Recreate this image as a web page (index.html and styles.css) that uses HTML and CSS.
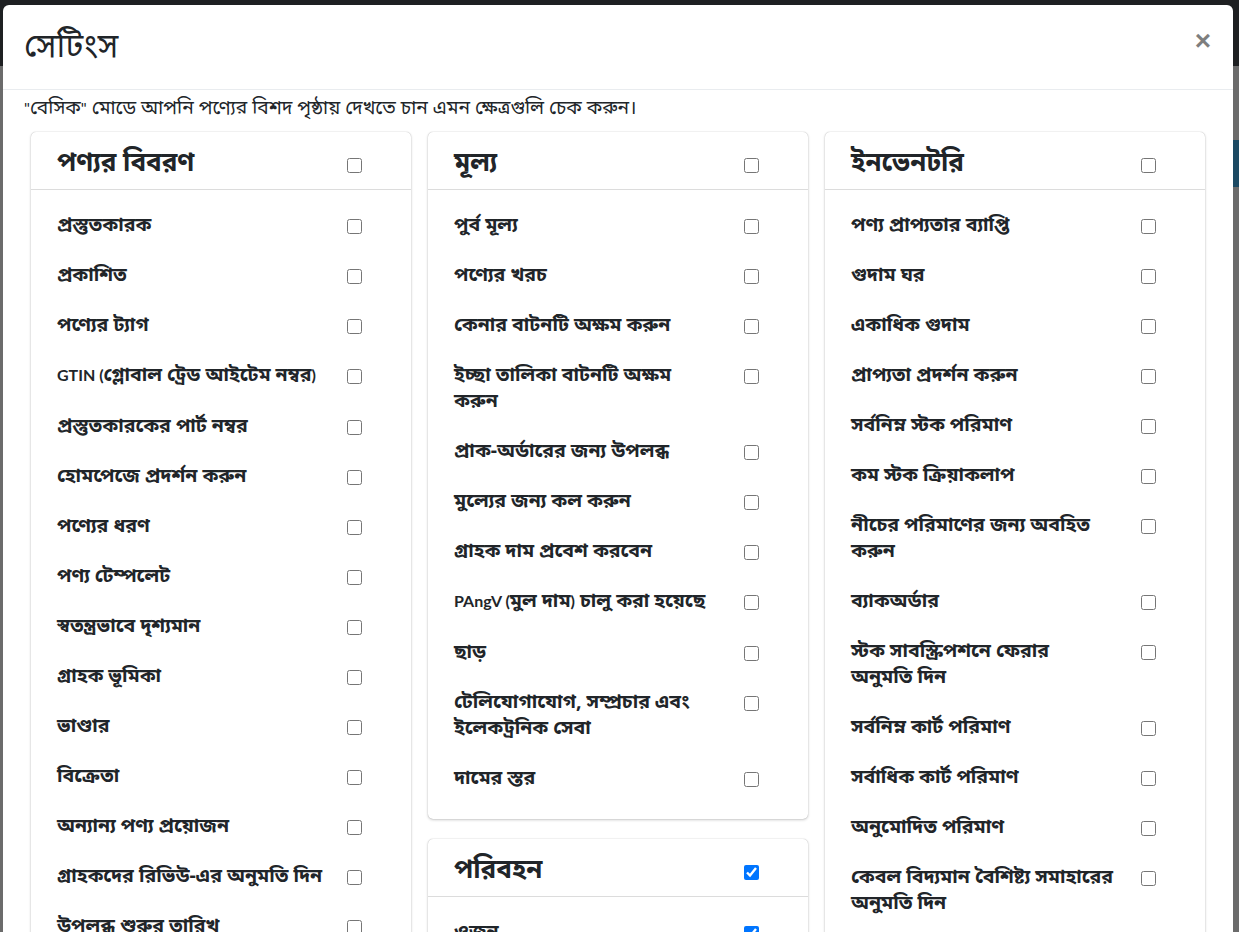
FILE: index.html
```html
<!DOCTYPE html>
<html lang="bn">
<head>
<meta charset="utf-8">
<title>সেটিংস</title>
<link rel="stylesheet" href="styles.css">
</head>
<body>
<div class="page">
  <div class="page-top"></div>
  <div class="page-main">
    <div class="page-band"></div>
  </div>
</div>

<div class="modal">
  <div class="modal-header">
    <h4 class="modal-title">সেটিংস</h4>
    <button class="close" type="button">×</button>
  </div>
  <div class="modal-body">
    <p class="intro"><span class="latin">"</span>বেসিক<span class="latin">"</span> মোডে আপনি পণ্যের বিশদ পৃষ্ঠায় দেখতে চান এমন ক্ষেত্রগুলি চেক করুন।</p>
    <div class="columns">
      <div class="column">
        <div class="card">
          <div class="card-header"><span class="card-title">পণ্যর বিবরণ</span><input type="checkbox"></div>
          <div class="card-body">
            <div class="item"><label>প্রস্তুতকারক</label><input type="checkbox"></div>
            <div class="item"><label>প্রকাশিত</label><input type="checkbox"></div>
            <div class="item"><label>পণ্যের ট্যাগ</label><input type="checkbox"></div>
            <div class="item"><label><span class="latin">GTIN (</span>গ্লোবাল ট্রেড আইটেম নম্বর<span class="latin">)</span></label><input type="checkbox"></div>
            <div class="item"><label>প্রস্তুতকারকের পার্ট নম্বর</label><input type="checkbox"></div>
            <div class="item"><label>হোমপেজে প্রদর্শন করুন</label><input type="checkbox"></div>
            <div class="item"><label>পণ্যের ধরণ</label><input type="checkbox"></div>
            <div class="item"><label>পণ্য টেম্পলেট</label><input type="checkbox"></div>
            <div class="item"><label>স্বতন্ত্রভাবে দৃশ্যমান</label><input type="checkbox"></div>
            <div class="item"><label>গ্রাহক ভূমিকা</label><input type="checkbox"></div>
            <div class="item"><label>ভাণ্ডার</label><input type="checkbox"></div>
            <div class="item"><label>বিক্রেতা</label><input type="checkbox"></div>
            <div class="item"><label>অন্যান্য পণ্য প্রয়োজন</label><input type="checkbox"></div>
            <div class="item"><label>গ্রাহকদের রিভিউ-এর অনুমতি দিন</label><input type="checkbox"></div>
            <div class="item"><label>উপলব্ধ শুরুর তারিখ</label><input type="checkbox"></div>
            <div class="item"><label>উপলব্ধ শেষ তারিখ</label><input type="checkbox"></div>
          </div>
        </div>
      </div>

      <div class="column">
        <div class="card">
          <div class="card-header"><span class="card-title">মূল্য</span><input type="checkbox"></div>
          <div class="card-body">
            <div class="item"><label>পুর্ব মূল্য</label><input type="checkbox"></div>
            <div class="item"><label>পণ্যের খরচ</label><input type="checkbox"></div>
            <div class="item"><label>কেনার বাটনটি অক্ষম করুন</label><input type="checkbox"></div>
            <div class="item"><label>ইচ্ছা তালিকা বাটনটি অক্ষম করুন</label><input type="checkbox"></div>
            <div class="item"><label>প্রাক-অর্ডারের জন্য উপলব্ধ</label><input type="checkbox"></div>
            <div class="item"><label>মুল্যের জন্য কল করুন</label><input type="checkbox"></div>
            <div class="item"><label>গ্রাহক দাম প্রবেশ করবেন</label><input type="checkbox"></div>
            <div class="item"><label><span class="latin">PAngV (</span>মুল দাম<span class="latin">)</span> চালু করা হয়েছে</label><input type="checkbox"></div>
            <div class="item"><label>ছাড়</label><input type="checkbox"></div>
            <div class="item"><label>টেলিযোগাযোগ, সম্প্রচার এবং ইলেকট্রনিক সেবা</label><input type="checkbox"></div>
            <div class="item"><label>দামের স্তর</label><input type="checkbox"></div>
          </div>
        </div>
        <div class="card">
          <div class="card-header"><span class="card-title">পরিবহন</span><input type="checkbox" checked></div>
          <div class="card-body">
            <div class="item"><label>ওজন</label><input type="checkbox" checked></div>
            <div class="item"><label>মাত্রা</label><input type="checkbox" checked></div>
          </div>
        </div>
      </div>

      <div class="column">
        <div class="card">
          <div class="card-header"><span class="card-title">ইনভেনটরি</span><input type="checkbox"></div>
          <div class="card-body">
            <div class="item"><label>পণ্য প্রাপ্যতার ব্যাপ্তি</label><input type="checkbox"></div>
            <div class="item"><label>গুদাম ঘর</label><input type="checkbox"></div>
            <div class="item"><label>একাধিক গুদাম</label><input type="checkbox"></div>
            <div class="item"><label>প্রাপ্যতা প্রদর্শন করুন</label><input type="checkbox"></div>
            <div class="item"><label>সর্বনিম্ন স্টক পরিমাণ</label><input type="checkbox"></div>
            <div class="item"><label>কম স্টক ক্রিয়াকলাপ</label><input type="checkbox"></div>
            <div class="item"><label>নীচের পরিমাণের জন্য অবহিত করুন</label><input type="checkbox"></div>
            <div class="item"><label>ব্যাকঅর্ডার</label><input type="checkbox"></div>
            <div class="item"><label>স্টক সাবস্ক্রিপশনে ফেরার অনুমতি&nbsp;দিন</label><input type="checkbox"></div>
            <div class="item"><label>সর্বনিম্ন কার্ট পরিমাণ</label><input type="checkbox"></div>
            <div class="item"><label>সর্বাধিক কার্ট পরিমাণ</label><input type="checkbox"></div>
            <div class="item"><label>অনুমোদিত পরিমাণ</label><input type="checkbox"></div>
            <div class="item"><label>কেবল বিদ্যমান বৈশিষ্ট্য সমাহারের অনুমতি দিন</label><input type="checkbox"></div>
            <div class="item"><label>ডাউনলোডযোগ্য পণ্য</label><input type="checkbox"></div>
          </div>
        </div>
      </div>
    </div>
  </div>
</div>
</body>
</html>
```

FILE: styles.css
```css
* { box-sizing: border-box; }

html, body {
  margin: 0;
  padding: 0;
  height: 100%;
  overflow: hidden;
}

body {
  font-family: "Noto Sans", "Noto Sans Bengali", sans-serif;
  font-size: 16px;
  line-height: 1.5;
  color: #212529;
  background: #6b6b6b;
}

.latin {
  font-family: Lato, "Liberation Sans", sans-serif;
  font-size: 16px;
}

.page {
  height: 100%;
  display: flex;
  flex-direction: column;
}

.page-top {
  height: 66px;
  background: #1e2022;
  flex: none;
}

.page-main {
  flex: 1;
  background: #6b6b6b;
  padding-top: 74px;
}

.page-band {
  height: 47px;
  background: #1c4a63;
  margin-left: 1180px;
}

.modal {
  position: absolute;
  top: 5px;
  left: 3px;
  width: 1230px;
  height: 1000px;
  background: #fff;
  border-radius: 6px;
  overflow: hidden;
}

.modal-header {
  height: 85px;
  display: flex;
  align-items: center;
  justify-content: space-between;
  padding: 0 21px;
  border-bottom: 1px solid #e9ecef;
}

.modal-title {
  margin: 0;
  font-size: 33px;
  font-weight: 400;
  line-height: 1.2;
  padding-bottom: 4px;
}

.close {
  border: 0;
  background: transparent;
  padding: 0 1px 12px 0;
  font-family: "Liberation Sans", sans-serif;
  font-size: 28px;
  font-weight: 700;
  line-height: 1;
  color: #000;
  opacity: 0.5;
}

.modal-body {
  padding: 5px 0 0;
}

.intro {
  margin: 0 0 12px 21px;
  font-size: 19.2px;
  line-height: 24px;
}

.columns {
  display: grid;
  grid-template-columns: 380px 380px 380px;
  column-gap: 17px;
  margin-left: 28px;
  align-items: start;
}

.column {
  display: flex;
  flex-direction: column;
  gap: 20px;
}

.card {
  background: #fff;
  border-radius: 5px;
  box-shadow: 0 0 1px rgba(0,0,0,.3), 0 1px 3px rgba(0,0,0,.2);
}

.card-header {
  height: 58px;
  display: flex;
  align-items: center;
  padding: 0 26px;
  border-bottom: 1px solid #dcdcdc;
}

.card-title {
  width: 290px;
  flex: none;
  font-size: 26px;
  font-weight: 700;
  line-height: 1.2;
  padding-top: 2px;
}

.card-body {
  padding: 11px 26px 15px;
}

.item {
  display: flex;
  align-items: flex-start;
  padding: 12px 0;
}

.item label {
  width: 266px;
  flex: none;
  margin: -2px 24px 2px 0;
  font-size: 19.5px;
  font-weight: 700;
  line-height: 26px;
}

input[type="checkbox"] {
  width: 15px;
  height: 15px;
  margin: 0;
  flex: none;
}

.item input[type="checkbox"] {
  margin-top: 6px;
}

.card-header input[type="checkbox"] {
  margin-top: 9px;
}
```
